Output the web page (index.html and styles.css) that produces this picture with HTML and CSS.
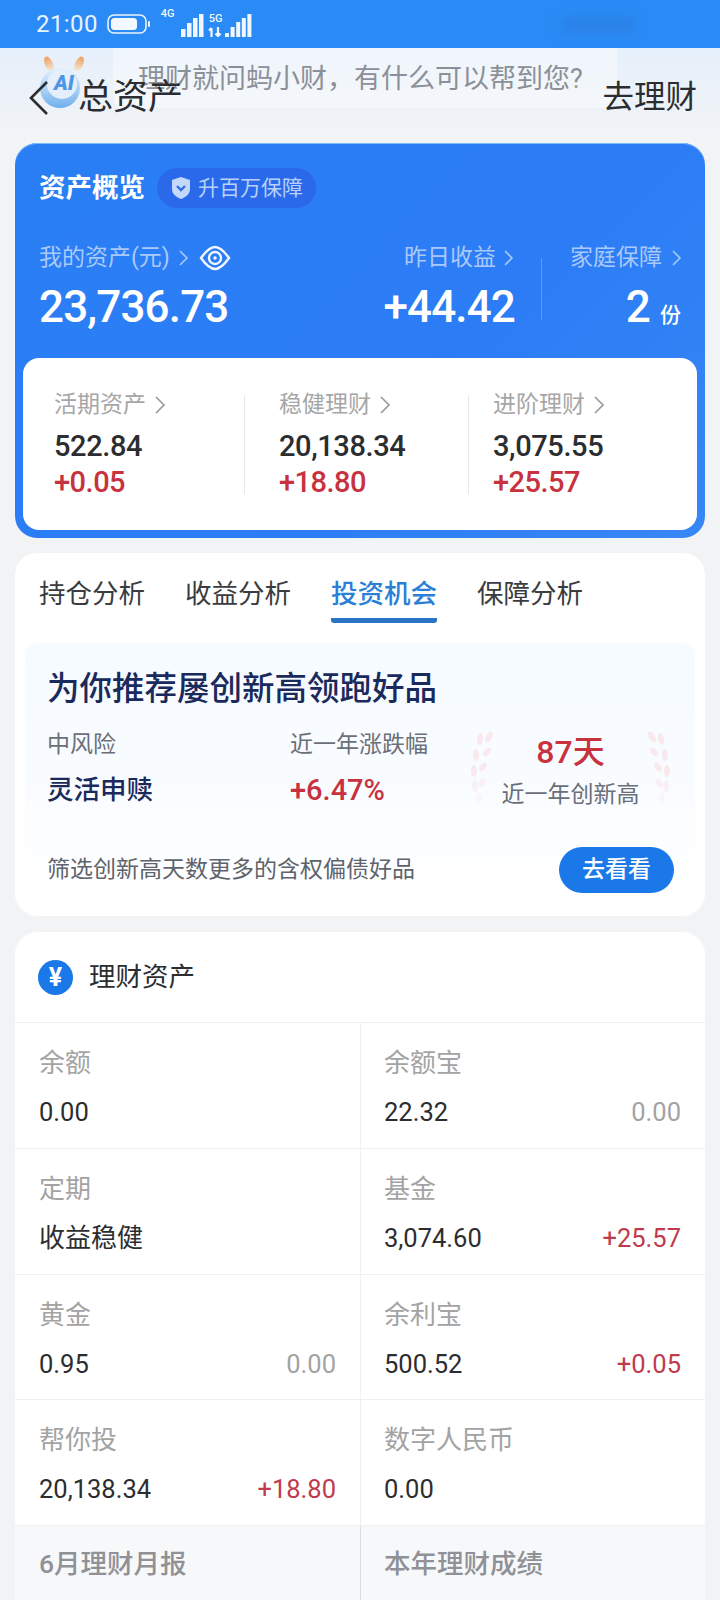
FILE: index.html
```html
<!DOCTYPE html>
<html lang="zh-CN">
<head>
<meta charset="utf-8">
<title>总资产</title>
<link rel="stylesheet" href="styles.css">
</head>
<body>
<div class="status">
  <span class="time">21:00</span>
  <svg class="battery" width="44" height="20" viewBox="0 0 44 20"><rect x="1" y="1" width="38" height="18" rx="6" fill="none" stroke="#eaf3ff" stroke-width="1.6"/><rect x="4" y="4" width="26" height="12" rx="3.5" fill="#f4f8ff"/><rect x="41" y="7" width="2" height="6" rx="1" fill="#eaf3ff"/></svg>
  <span class="net net-4g">4G</span>
  <svg class="bars bars-a" width="23" height="24" viewBox="0 0 23 24"><rect x="0" y="16" width="4.5" height="8" fill="#f2f7ff"/><rect x="6" y="10" width="4.5" height="14" fill="#f2f7ff"/><rect x="12" y="5" width="4.5" height="19" fill="#f2f7ff"/><rect x="18" y="1" width="4.5" height="23" fill="#f2f7ff"/></svg>
  <span class="net-stack"><span class="net">5G</span><svg width="15" height="10" viewBox="0 0 15 10"><path d="M3.5 10V1M1 3.5l2.5-2.5M10 0v9M7.5 6.5l2.5 2.5 2.5-2.5" fill="none" stroke="#f2f7ff" stroke-width="2.2"/></svg></span>
  <svg class="bars bars-b" width="27" height="24" viewBox="0 0 27 24"><rect x="0" y="20" width="4" height="4" fill="#f2f7ff"/><rect x="5.6" y="14" width="4" height="10" fill="#f2f7ff"/><rect x="11.2" y="9" width="4" height="15" fill="#f2f7ff"/><rect x="16.8" y="5" width="4" height="19" fill="#f2f7ff"/><rect x="22.4" y="1" width="4" height="23" fill="#f2f7ff"/></svg>
  <span class="status-blur"></span>
</div>

<header class="header">
  <div class="search"><span>理财就问蚂小财，有什么可以帮到您?</span></div>
  <svg class="ai" width="48" height="56" viewBox="0 0 48 56">
    <defs>
      <linearGradient id="ear" x1="0" y1="0" x2="0" y2="1"><stop offset="0" stop-color="#ec9f5c"/><stop offset="1" stop-color="#f5ecdf"/></linearGradient>
      <linearGradient id="ball" x1="0" y1="0" x2="0" y2="1"><stop offset="0" stop-color="#e3eefa"/><stop offset="0.55" stop-color="#a9d0f5"/><stop offset="1" stop-color="#6fb0ec"/></linearGradient>
    </defs>
    <ellipse cx="11" cy="8" rx="4" ry="8" transform="rotate(-25 11 8)" fill="url(#ear)"/>
    <ellipse cx="41" cy="8" rx="4" ry="8" transform="rotate(25 41 8)" fill="url(#ear)"/>
    <circle cx="22" cy="32" r="20" fill="url(#ball)"/>
    <circle cx="24" cy="28" r="15" fill="#e4effb"/>
    <text class="ai-text" x="26" y="34">AI</text>
  </svg>
  <div class="head-left">
    <svg class="back" width="22" height="36" viewBox="0 0 22 36"><path d="M19 2L3 18l16 16" fill="none" stroke="#2b2d30" stroke-width="2.6"/></svg>
    <span class="head-title">总资产</span>
  </div>
  <span class="head-link">去理财</span>
</header>

<section class="overview">
  <div class="ov-head">
    <span class="ov-title">资产概览</span>
    <span class="badge">
      <svg width="20" height="24" viewBox="0 0 20 24"><path d="M10 1l9 3v9c0 5-4 8-9 10-5-2-9-5-9-10V4z" fill="#c3d8fb"/><path d="M6 10l4 4 4-4" fill="none" stroke="#2f6fe6" stroke-width="2.4"/></svg>
      升百万保障
    </span>
  </div>
  <div class="ov-stats">
    <div class="ov-col ov-main">
      <div class="ov-label">我的资产(元)
        <svg class="chev" width="14" height="18" viewBox="0 0 14 18"><path d="M3 2l7 7-7 7" fill="none" stroke="currentColor" stroke-width="1.6"/></svg>
        <svg class="eye" width="32" height="26" viewBox="0 0 32 26"><path d="M2 13C7 6 11 2 16 2s9 4 14 11c-5 7-9 11-14 11S7 20 2 13z" fill="none" stroke="#f2f7ff" stroke-width="2.4"/><circle cx="16" cy="13" r="6" fill="none" stroke="#f2f7ff" stroke-width="2.4"/><circle cx="16" cy="13" r="1.8" fill="#f2f7ff"/></svg>
      </div>
      <div class="ov-num">23,736.73</div>
    </div>
    <div class="ov-col ov-right">
      <div class="ov-label">昨日收益 <svg class="chev" width="12" height="18" viewBox="0 0 12 18"><path d="M2 2l7 7-7 7" fill="none" stroke="currentColor" stroke-width="1.6"/></svg></div>
      <div class="ov-num">+44.42</div>
    </div>
    <span class="ov-sep"></span>
    <div class="ov-col ov-family">
      <div class="ov-label ov-label-wide">家庭保障 <svg class="chev" width="12" height="18" viewBox="0 0 12 18"><path d="M2 2l7 7-7 7" fill="none" stroke="currentColor" stroke-width="1.6"/></svg></div>
      <div class="ov-num">2<small>份</small></div>
    </div>
  </div>
  <div class="panel">
    <div class="pcol pcol-1">
      <div class="p-label">活期资产 <svg class="chev" width="14" height="20" viewBox="0 0 14 20"><path d="M3 2l8 8-8 8" fill="none" stroke="#9a9a9a" stroke-width="1.7"/></svg></div>
      <div class="p-val">522.84</div>
      <div class="p-delta">+0.05</div>
    </div>
    <div class="pcol pcol-2">
      <div class="p-label">稳健理财 <svg class="chev" width="14" height="20" viewBox="0 0 14 20"><path d="M3 2l8 8-8 8" fill="none" stroke="#9a9a9a" stroke-width="1.7"/></svg></div>
      <div class="p-val">20,138.34</div>
      <div class="p-delta">+18.80</div>
    </div>
    <div class="pcol pcol-3">
      <div class="p-label">进阶理财 <svg class="chev" width="14" height="20" viewBox="0 0 14 20"><path d="M3 2l8 8-8 8" fill="none" stroke="#9a9a9a" stroke-width="1.7"/></svg></div>
      <div class="p-val">3,075.55</div>
      <div class="p-delta">+25.57</div>
    </div>
  </div>
</section>

<section class="card analysis">
  <nav class="tabs">
    <span class="tab">持仓分析</span>
    <span class="tab">收益分析</span>
    <span class="tab active">投资机会</span>
    <span class="tab">保障分析</span>
  </nav>
  <div class="banner">
    <h2 class="b-title">为你推荐屡创新高领跑好品</h2>
    <div class="b-row">
      <div class="b-col b-col-1">
        <div class="b-label">中风险</div>
        <div class="b-val">灵活申赎</div>
      </div>
      <div class="b-col b-col-2">
        <div class="b-label">近一年涨跌幅</div>
        <div class="b-val b-red">+6.47%</div>
      </div>
      <div class="b-col-3">
        <svg class="laurel" width="30" height="72" viewBox="0 0 26 72"><g fill="#f9e8ec"><ellipse cx="20" cy="6" rx="3" ry="6" transform="rotate(30 20 6)"/><ellipse cx="11" cy="8" rx="3" ry="6" transform="rotate(10 11 8)"/><ellipse cx="18" cy="21" rx="3" ry="5" transform="rotate(45 18 21)"/><ellipse cx="7" cy="24" rx="3" ry="6"/><ellipse cx="14" cy="36" rx="3" ry="5" transform="rotate(35 14 36)"/><ellipse cx="5" cy="40" rx="3" ry="6"/><ellipse cx="6" cy="55" rx="3" ry="6" fill="#f8f0f4"/><ellipse cx="13" cy="52" rx="3" ry="5" fill="#f8f0f4" transform="rotate(30 13 52)"/><ellipse cx="10" cy="67" rx="3" ry="5" fill="#faf5f8"/></g></svg>
        <div class="b-center">
          <div class="b-days">87天</div>
          <div class="b-label b-days-label">近一年创新高</div>
        </div>
        <svg class="laurel laurel-r" width="30" height="72" viewBox="0 0 26 72"><g fill="#f9e8ec"><ellipse cx="20" cy="6" rx="3" ry="6" transform="rotate(30 20 6)"/><ellipse cx="11" cy="8" rx="3" ry="6" transform="rotate(10 11 8)"/><ellipse cx="18" cy="21" rx="3" ry="5" transform="rotate(45 18 21)"/><ellipse cx="7" cy="24" rx="3" ry="6"/><ellipse cx="14" cy="36" rx="3" ry="5" transform="rotate(35 14 36)"/><ellipse cx="5" cy="40" rx="3" ry="6"/><ellipse cx="6" cy="55" rx="3" ry="6" fill="#f8f0f4"/><ellipse cx="13" cy="52" rx="3" ry="5" fill="#f8f0f4" transform="rotate(30 13 52)"/><ellipse cx="10" cy="67" rx="3" ry="5" fill="#faf5f8"/></g></svg>
      </div>
    </div>
    <div class="b-foot">
      <span class="b-desc">筛选创新高天数更多的含权偏债好品</span>
      <button class="b-btn">去看看</button>
    </div>
  </div>
</section>

<section class="card assets">
  <div class="a-head">
    <span class="yen">¥</span>
    <span class="a-title">理财资产</span>
  </div>
  <div class="a-grid">
    <div class="cell"><div class="c-label">余额</div><div class="c-row"><span class="c-val">0.00</span></div></div>
    <div class="cell"><div class="c-label">余额宝</div><div class="c-row"><span class="c-val">22.32</span><span class="c-zero">0.00</span></div></div>
    <div class="cell"><div class="c-label">定期</div><div class="c-row"><span class="c-val c-cjk">收益稳健</span></div></div>
    <div class="cell"><div class="c-label">基金</div><div class="c-row"><span class="c-val">3,074.60</span><span class="c-up">+25.57</span></div></div>
    <div class="cell"><div class="c-label">黄金</div><div class="c-row"><span class="c-val">0.95</span><span class="c-zero">0.00</span></div></div>
    <div class="cell"><div class="c-label">余利宝</div><div class="c-row"><span class="c-val">500.52</span><span class="c-up">+0.05</span></div></div>
    <div class="cell"><div class="c-label">帮你投</div><div class="c-row"><span class="c-val">20,138.34</span><span class="c-up">+18.80</span></div></div>
    <div class="cell"><div class="c-label">数字人民币</div><div class="c-row"><span class="c-val">0.00</span></div></div>
    <div class="cell cell-gray"><div class="c-label c-strong">6月理财月报</div></div>
    <div class="cell cell-gray"><div class="c-label c-strong">本年理财成绩</div></div>
  </div>
</section>
</body>
</html>
```
FILE: styles.css
```css
* { box-sizing: border-box; }
html, body { margin: 0; padding: 0; }
body {
  width: 720px;
  height: 1600px;
  overflow: hidden;
  background: #f2f3f5;
  font-family: Roboto, "Noto Sans CJK SC", sans-serif;
  color: #2b2d30;
}

/* status bar */
.status {
  position: relative;
  display: flex;
  align-items: center;
  height: 48px;
  padding-left: 36px;
  background: #2a8bf6;
  color: #eaf3ff;
}
.time { font-size: 24px; line-height: 28px; letter-spacing: 0.4px; }
.battery { margin-left: 9px; }
.net { font-size: 11px; line-height: 10px; font-weight: 500; color: #f2f7ff; }
.net-4g { margin: -20px 0 0 10px; }
.bars { margin-top: 2px; }
.bars-a { margin-left: 6px; }
.bars-b { margin-left: -1px; }
.net-stack { display: flex; flex-direction: column; align-items: center; width: 20px; margin-left: 2px; margin-top: 2px; gap: 3px; }
.status-blur {
  position: absolute;
  left: 560px;
  top: 18px;
  width: 76px;
  height: 14px;
  border-radius: 7px;
  background: #2b80e4;
  filter: blur(6px);
}

/* header */
.header {
  position: relative;
  display: flex;
  align-items: center;
  justify-content: space-between;
  height: 95px;
  padding: 4px 23px 0 28px;
  background: linear-gradient(180deg, #e6f0fb 0%, #edf2f8 55%, #f2f4f7 100%);
}
.search {
  position: absolute;
  left: 113px;
  top: 0;
  width: 504px;
  height: 60px;
  border-radius: 0 0 12px 12px;
  background: rgba(255, 255, 255, 0.38);
  padding-left: 25px;
  font-size: 27px;
  line-height: 62px;
  color: #8b9098;
  white-space: nowrap;
}
.ai { position: absolute; left: 38px; top: 8px; }
.ai-text { font-family: Roboto, sans-serif; font-size: 21px; font-weight: 900; font-style: italic; fill: #4f97e4; text-anchor: middle; }
.head-left { position: relative; display: flex; align-items: center; }
.back { display: block; }
.head-title { margin-left: 28px; font-size: 35px; line-height: 44px; }
.head-link { position: relative; font-size: 31.5px; line-height: 44px; }

/* overview */
.overview {
  margin: 0 15px;
  padding: 25px 8px 8px;
  height: 395px;
  border-radius: 22px;
  background: linear-gradient(135deg, #2a7ff4 0%, #2c7cf6 60%, #3787f5 100%);
  box-shadow: inset 0 1px 0 #7cbaf3;
}
.ov-head { display: flex; align-items: center; height: 40px; padding-left: 16px; }
.ov-title { font-size: 26.5px; line-height: 40px; font-weight: 700; color: #fff; }
.badge {
  display: flex;
  align-items: center;
  gap: 7px;
  height: 40px;
  margin-left: 12px;
  padding: 0 13px 0 14px;
  border-radius: 20px;
  background: #2a6aea;
  color: #b7d1fb;
  font-size: 21px;
  line-height: 40px;
}
.ov-stats { display: flex; align-items: flex-start; margin-top: 35px; padding: 0 14px 0 16px; height: 115px; }
.ov-col { display: flex; flex-direction: column; }
.ov-main { flex: 1; }
.ov-right { width: 170px; align-items: flex-end; }
.ov-family { width: 141px; align-items: flex-end; }
.ov-sep { width: 1px; height: 62px; margin: 15px 0 0 26px; background: rgba(255, 255, 255, 0.22); }
.ov-label { display: flex; align-items: center; gap: 7px; height: 30px; font-size: 23px; line-height: 30px; color: #a9c9fb; white-space: nowrap; }
.ov-label-wide { gap: 9px; }
.eye { margin-left: 1px; }
.ov-num { margin-top: 9px; font-size: 44px; line-height: 50px; font-weight: 500; letter-spacing: -0.85px; color: #fff; white-space: nowrap; }
.ov-num small { margin: 0 2px 0 10px; font-size: 21px; font-weight: 500; letter-spacing: 0; }
.panel {
  display: grid;
  grid-template-columns: 221px 224px 1fr;
  height: 172px;
  padding-top: 37px;
  border-radius: 16px;
  background: #fff;
}
.pcol { height: 99px; }
.pcol-1 { padding-left: 31px; }
.pcol-2 { padding-left: 34px; border-left: 1px solid #e9e9e9; }
.pcol-3 { padding-left: 24px; border-left: 1px solid #e9e9e9; }
.p-label { display: flex; align-items: center; gap: 7px; height: 20px; font-size: 23px; line-height: 20px; color: #a6a6a6; white-space: nowrap; }
.p-val { margin-top: 19px; font-size: 29px; line-height: 24px; font-weight: 500; letter-spacing: -0.4px; color: #2b2d30; }
.p-delta { margin-top: 12px; font-size: 29px; line-height: 24px; font-weight: 500; letter-spacing: -0.5px; color: #c8323f; }

/* cards */
.card { margin: 15px 15px 0; border-radius: 22px; background: #fff; }
.analysis { padding: 21px 0 23px; }
.tabs { display: flex; gap: 40px; padding-left: 24px; }
.tab { padding-bottom: 4px; border-bottom: 5px solid transparent; font-size: 26.5px; line-height: 40px; color: #3a3c40; white-space: nowrap; }
.tab.active { color: #2a7fd6; font-weight: 500; border-bottom-color: #2a74c4; border-radius: 0 0 3px 3px; }
.banner {
  margin: 20px 10px 0;
  padding: 24px 21px 0 22px;
  border-radius: 12px 12px 0 0;
  background: linear-gradient(180deg, #f6fbff 0%, #f9fcff 55%, #ffffff 100%);
}
.b-title { margin: 0; font-size: 32.5px; line-height: 44px; font-weight: 500; color: #1a2a5c; white-space: nowrap; }
.b-row { display: flex; margin-top: 18px; height: 82px; }
.b-col-1 { flex: none; width: 243px; }
.b-col-2 { flex: none; width: 177px; }
.b-label { font-size: 23px; line-height: 32px; color: #6a6f78; white-space: nowrap; }
.b-val { margin-top: 11px; font-size: 26.5px; line-height: 36px; font-weight: 500; color: #1a2a5c; }
.b-red { font-size: 29px; color: #c8323f; }
.b-col-3 { display: flex; flex: none; align-items: flex-start; width: 207px; }
.laurel { flex: none; margin-top: 2px; }
.laurel-r { transform: scaleX(-1); }
.b-center { flex: none; width: 147px; text-align: center; }
.b-days { margin-top: 3px; font-size: 32px; line-height: 40px; font-weight: 500; color: #c8323f; }
.b-days-label { margin-top: 7px; }
.b-foot { display: flex; align-items: center; justify-content: space-between; margin-top: 36px; }
.b-desc { font-size: 23px; line-height: 32px; color: #5e636c; }
.b-btn {
  width: 115px;
  height: 46px;
  padding: 0;
  border: 0;
  border-radius: 23px;
  background: #1a78e8;
  color: #fff;
  font-family: inherit;
  font-size: 23px;
  font-weight: 500;
  line-height: 46px;
}

/* assets */
.assets { margin-top: 16px; border-radius: 22px 22px 0 0; }
.a-head { display: flex; align-items: center; height: 91px; padding-left: 23px; border-bottom: 1px solid #f0f0f0; }
.yen {
  display: flex;
  align-items: center;
  justify-content: center;
  width: 35px;
  height: 35px;
  border-radius: 50%;
  background: #1a78e8;
  color: #fff;
  font-size: 25px;
  font-weight: 700;
}
.a-title { margin-left: 16px; font-size: 26.5px; line-height: 40px; color: #2b2d30; }
.a-grid { display: grid; grid-template-columns: 345px 345px; grid-auto-rows: 125.75px; }
.cell { padding: 25px 24px 0 24px; border-bottom: 1px solid #f0f0f0; }
.cell:nth-child(even) { padding: 25px 24px 0 23px; border-left: 1px solid #f0f0f0; }
.c-label { font-size: 26px; line-height: 30px; color: #a3a3a3; white-space: nowrap; }
.c-row { display: flex; justify-content: space-between; margin-top: 19px; }
.c-val { font-size: 25.5px; line-height: 30px; color: #2b2d30; white-space: nowrap; }
.c-cjk { font-size: 26px; }
.c-zero { font-size: 25.5px; line-height: 30px; color: #a3a3a3; }
.c-up { font-size: 25.5px; line-height: 30px; color: #c13a4c; }
.cell-gray, .cell-gray:nth-child(even) { padding-top: 23px; background: #f7f8fa; border-bottom: 0; }
.cell-gray:nth-child(even) { border-left: 1px solid #dcdde0; }
.c-strong { font-size: 26.5px; font-weight: 500; color: #8f9196; }
```
